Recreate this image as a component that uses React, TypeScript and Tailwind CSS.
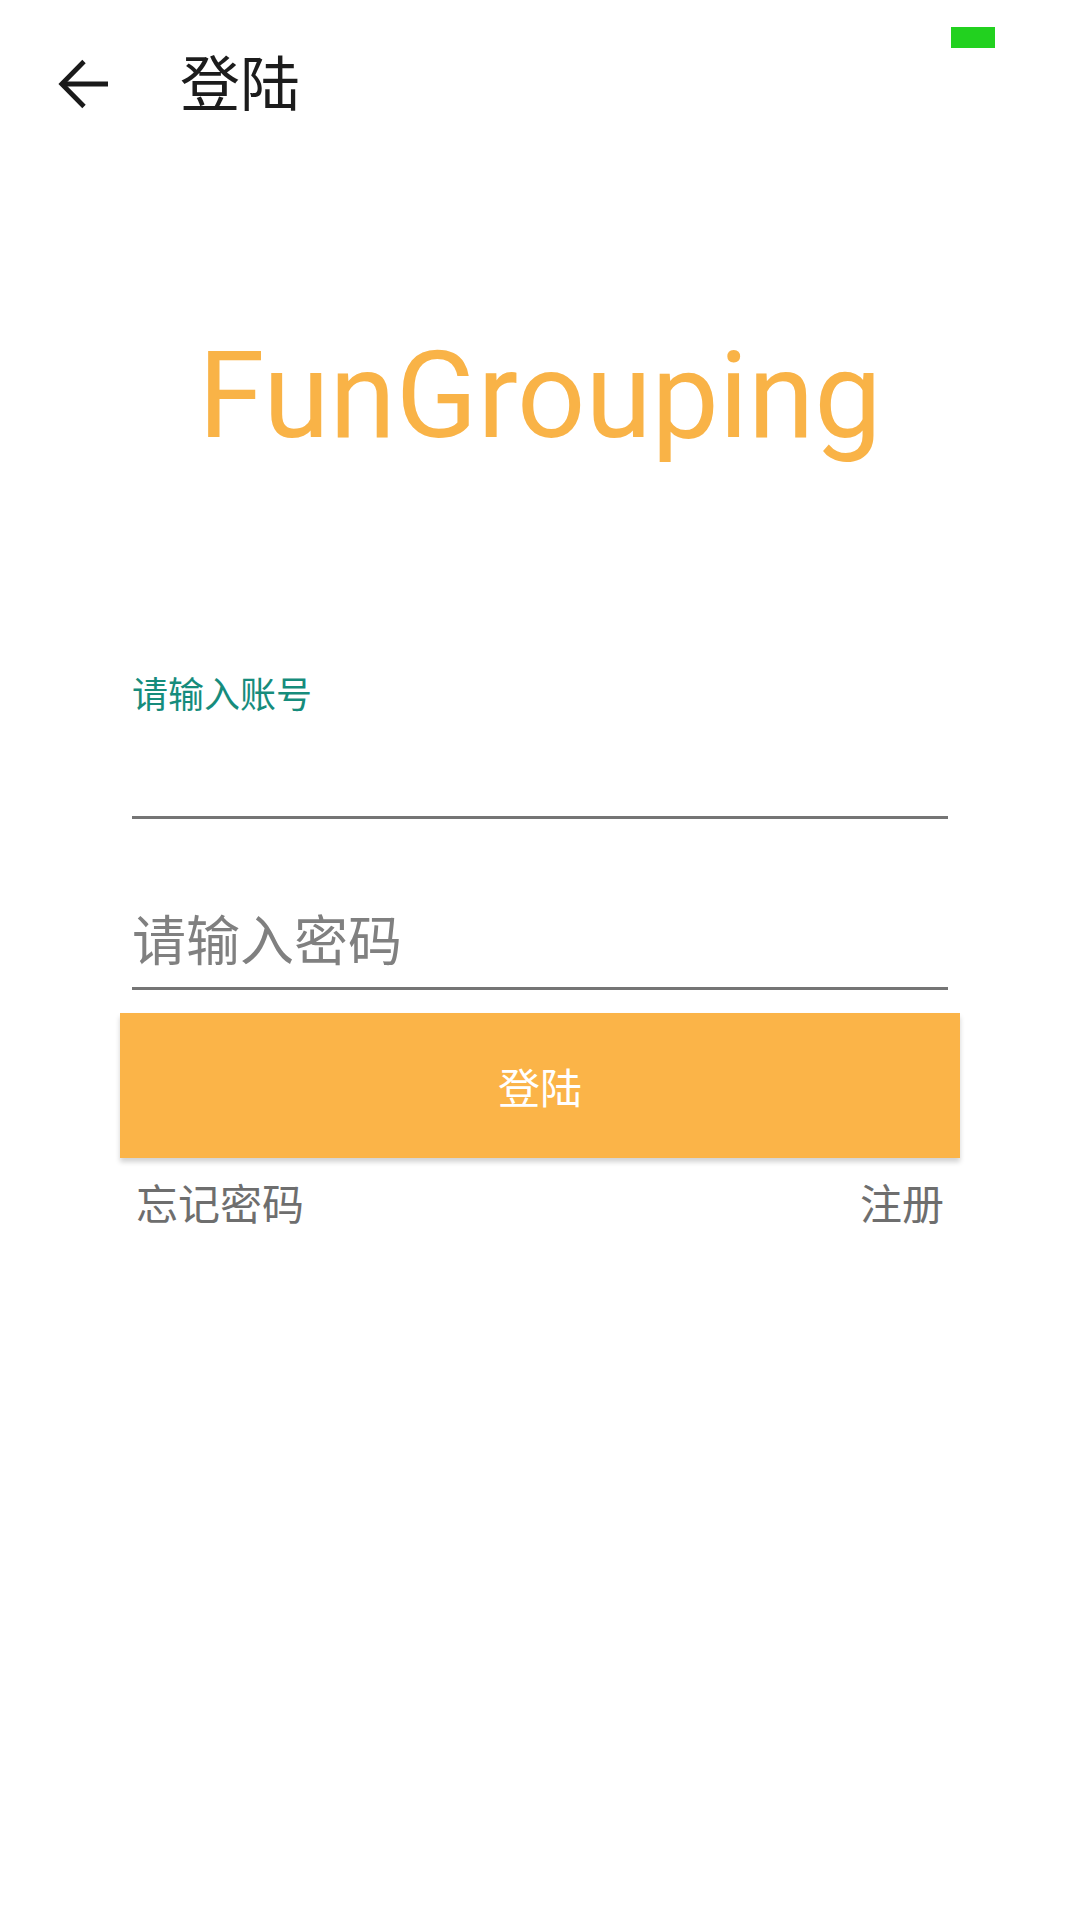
import React from "react";

const cjk = { fontFamily: '"Noto Sans CJK SC", "Noto Sans", sans-serif' };

export default function App() {
  return (
    <div className="relative w-[1080px] h-[1920px] bg-white overflow-hidden">
      <div className="absolute left-[951px] top-[27px] w-[44px] h-[21px] bg-[#22d11f]" />
      <div className="flex items-center h-[168px]">
        <svg className="ml-[48px] w-[72px] h-[72px]" viewBox="0 0 24 24" fill="none" stroke="#1a1a1a" strokeWidth="1.6" strokeLinecap="butt" strokeLinejoin="miter">
          <path d="M20 12H5" />
          <path d="M12 4.5L4.6 12L12 19.5" />
        </svg>
        <span className="ml-[60px] mb-[8px] text-[60px] leading-none text-[#1c1c1c]" style={cjk}>
          登陆
        </span>
      </div>

      <div
        className="mt-[168px] text-center text-[120px] leading-none text-[#f9b347]"
        style={{ fontFamily: 'Roboto, "Liberation Sans", sans-serif' }}
      >
        FunGrouping
      </div>

      <div className="mx-[132px]" style={cjk}>
        <div className="mt-[218px] text-[36px] leading-none text-[#168c7c]">请输入账号</div>
        <div className="h-[109px] border-b-[3px] border-[#757575]" />
        <div className="mt-[92px] h-[79px] border-b-[3px] border-[#757575]">
          <div className="text-[54px] leading-none text-[#808080]">请输入密码</div>
        </div>
      </div>

      <div
        className="mx-[120px] mt-[23px] h-[145px] flex items-center justify-center bg-[#fbb448] shadow-[0_4px_5px_rgba(0,0,0,0.18)]"
        style={cjk}
      >
        <span className="text-[42px] leading-none text-white">登陆</span>
      </div>

      <div className="mx-[132px] px-[4px] mt-[23px] flex justify-between text-[42px] leading-none text-[#6e6e6e]" style={cjk}>
        <span>忘记密码</span>
        <span>注册</span>
      </div>
    </div>
  );
}
